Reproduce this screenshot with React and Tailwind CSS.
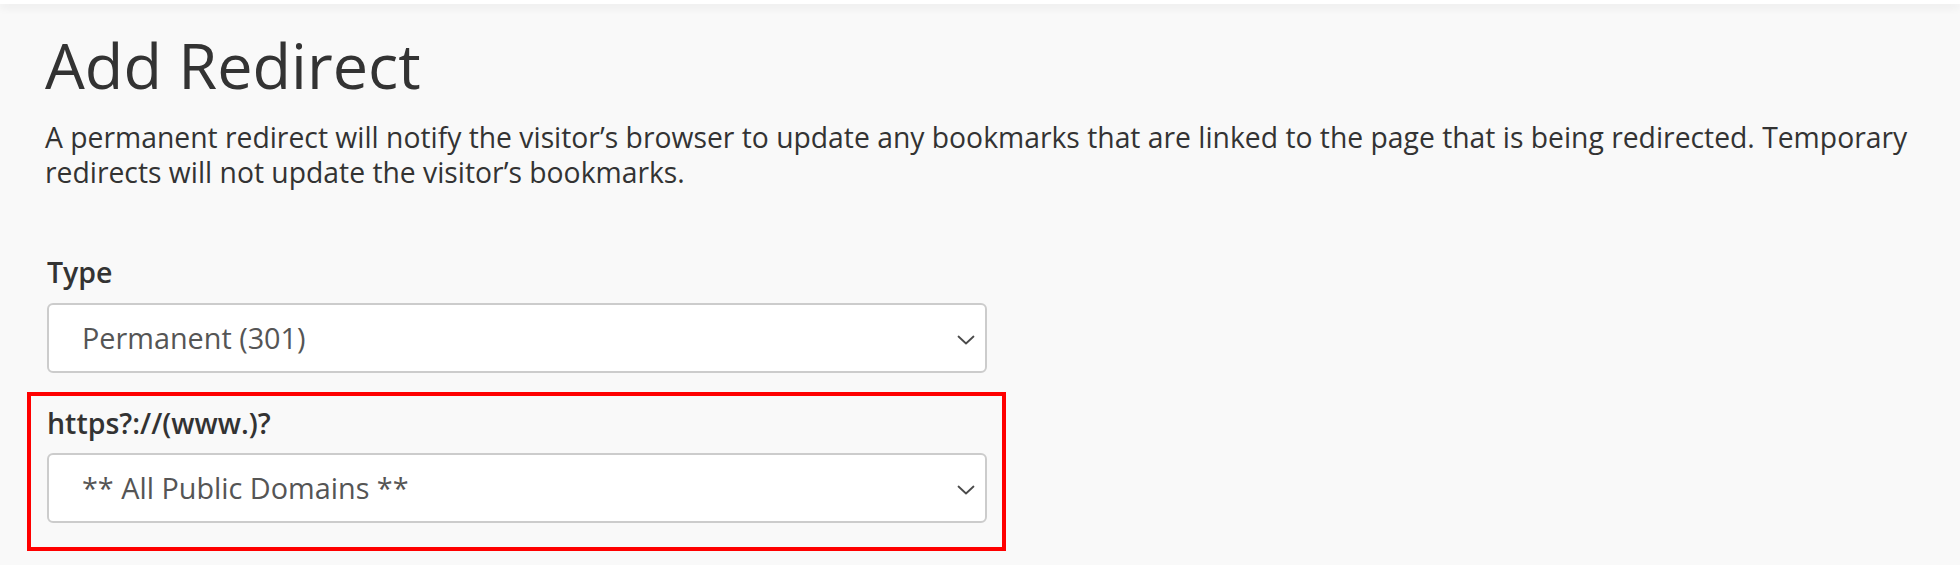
import { useState } from 'react';

const Chevron = () => (
  <svg width="18" height="10" viewBox="0 0 18 10" fill="none" className="shrink-0">
    <path d="M1.5 1.5 L9 8.5 L16.5 1.5" stroke="#4a4a4a" strokeWidth="1.8" strokeLinecap="round" strokeLinejoin="round" />
  </svg>
);

const SelectBox = ({ value, onChange, options }) => (
  <div className="relative w-[940px] h-[70px] rounded-[6px] border-2 border-[#cccccc] bg-white">
    <select
      value={value}
      onChange={(e) => onChange(e.target.value)}
      className="appearance-none w-full h-full bg-transparent pl-[33px] pr-12 text-[28.8px] text-[#555555] outline-none"
    >
      {options.map((o) => (
        <option key={o} value={o}>{o}</option>
      ))}
    </select>
    <div className="pointer-events-none absolute right-[10px] top-[30px]">
      <Chevron />
    </div>
  </div>
);

const App = () => {
  const [type, setType] = useState('Permanent (301)');
  const [domain, setDomain] = useState('** All Public Domains **');

  return (
    <div className="min-h-[565px] bg-[#f9f9f9] font-['Open_Sans',sans-serif] text-[#333333]">
      <div className="h-[4px] bg-white shadow-[0_3px_8px_rgba(0,0,0,0.09)]" />
      <div className="pt-[26px] pl-[45px] pr-[40px]">
        <h1 className="text-[63px] leading-[70px] font-normal text-[#333333]">Add Redirect</h1>
        <p className="mt-[20px] text-[28.3px] leading-[35px] text-[#333333]">
          A permanent redirect will notify the visitor’s browser to update any bookmarks that are linked to the page that is being redirected. Temporary redirects will not update the visitor’s bookmarks.
        </p>
      </div>

      <div className="pl-[27px] mt-[65px] w-[1006px]">
        <div className="px-[20px]">
          <label className="block text-[28.5px] leading-[35px] font-semibold text-[#333333]">Type</label>
          <div className="mt-[13px]">
            <SelectBox
              value={type}
              onChange={setType}
              options={['Permanent (301)', 'Temporary (302)']}
            />
          </div>
        </div>

        <div className="mt-[19px] border-4 border-[#ff0000] px-[16px] pt-[10px] pb-[24px]">
          <label className="block text-[28.5px] leading-[35px] font-semibold text-[#333333]">https?://(www.)?</label>
          <div className="mt-[12px]">
            <SelectBox
              value={domain}
              onChange={setDomain}
              options={['** All Public Domains **']}
            />
          </div>
        </div>
      </div>
    </div>
  );
};

export default App;
